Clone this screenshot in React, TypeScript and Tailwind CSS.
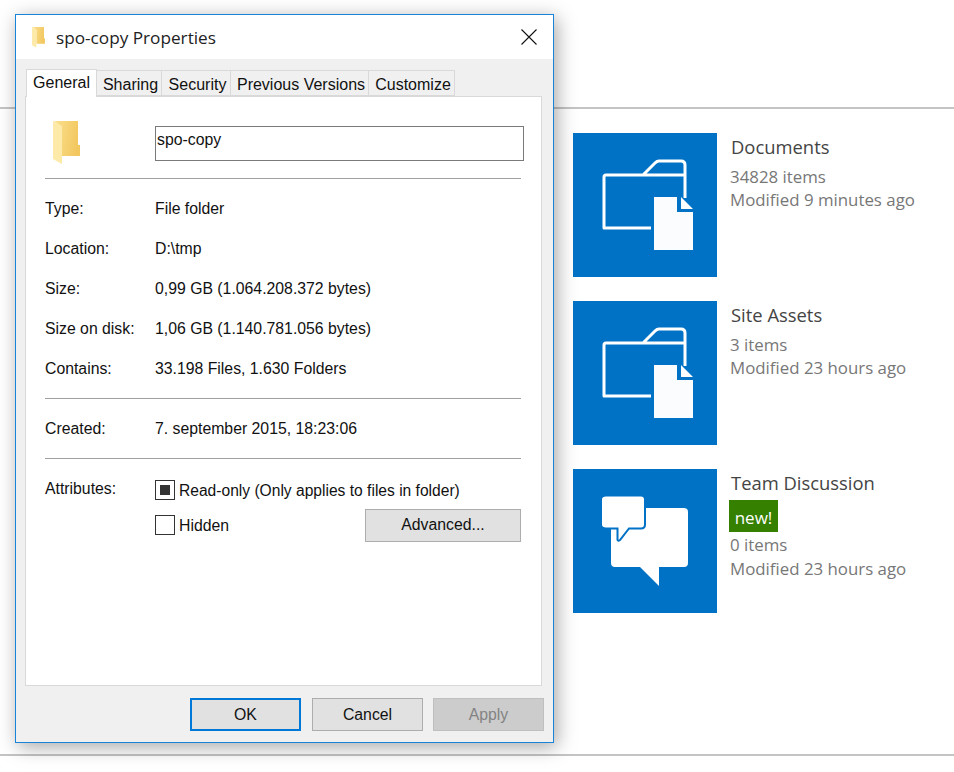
import React from 'react';

const FolderGlyph: React.FC<{ className: string; id: string }> = ({ className, id }) => (
  <svg className={className} viewBox="0 0 27 44">
    <defs>
      <linearGradient id={id} x1="0" y1="0" x2="1" y2="0.2">
        <stop offset="0" stopColor="#fbe08f" />
        <stop offset="1" stopColor="#f2c75f" />
      </linearGradient>
    </defs>
    <path d="M1 0h24v24h2v11H9V6z" fill={`url(#${id})`} />
    <path d="M0 0l9 5v38l-9-5z" fill="#fdeaa8" />
  </svg>
);

const FolderTileIcon = () => (
  <svg className="w-36 h-36" viewBox="0 0 144 144">
    <path d="M78 95H31V44q0-2 2-2H70L82 30q2-2 4-2h22q4 0 4 4v33M70 42h42" fill="none" stroke="#fff" strokeWidth="3" strokeLinejoin="round" />
    <path d="M81 64h23v15h16v38H81z" fill="#fbfcfe" />
    <path d="M108 64l12 12h-12z" fill="#fbfcfe" />
  </svg>
);

const ChatTileIcon = () => (
  <svg className="w-36 h-36" viewBox="0 0 144 144">
    <path d="M43 39h68q4 0 4 4v51q0 4-4 4H86v19L67 98H42q-4 0-4-4V43q0-4 5-4z" fill="#fff" />
    <path d="M33 26.500h35q4 0 4 4v25q0 4-4 4H56L47 71q-2 1.500-2.500 0V59.500H33q-5 0-5-4v-25q0-4 5-4z" fill="#fff" stroke="#0072c6" strokeWidth="2" />
  </svg>
);

const TILES = [
  { title: 'Documents', items: '34828 items', modified: 'Modified 9 minutes ago', icon: <FolderTileIcon /> },
  { title: 'Site Assets', items: '3 items', modified: 'Modified 23 hours ago', icon: <FolderTileIcon /> },
  { title: 'Team Discussion', items: '0 items', modified: 'Modified 23 hours ago', isNew: true, icon: <ChatTileIcon /> },
];

const TABS = [
  { label: 'Sharing', width: 'w-[65px]' },
  { label: 'Security', width: 'w-[69px]' },
  { label: 'Previous Versions', width: 'w-[138px]' },
  { label: 'Customize', width: 'w-[86px]' },
];

const Row: React.FC<{ label: string; value: string }> = ({ label, value }) => (
  <div className="flex h-10 items-center">
    <span className="w-[110px]">{label}</span>
    <span>{value}</span>
  </div>
);

export default function App() {
  return (
    <div className="relative h-[772px] overflow-hidden bg-white font-['Open_Sans',sans-serif]">
      {/* SharePoint page behind the dialog */}
      <div className="h-[109px] border-b-2 border-[#c4c4c4]" />
      <div className="h-[647px] border-b-2 border-[#c4c4c4] pl-[573px] pt-6 flex flex-col gap-6">
        {TILES.map(tile => (
          <div key={tile.title} className="flex">
            <div className="w-36 h-36 bg-[#0072c6] shrink-0">{tile.icon}</div>
            <div className="pl-[13px] pt-[1px]">
              <div className="text-[18.400px] leading-[26px] text-[#444444] pl-[1px]">{tile.title}</div>
              {tile.isNew && (
                <div className="mt-[4px] mb-[1px] -ml-[1px] w-[49px] h-8 bg-[#368000] text-white text-[17px] leading-[35px] text-center">new!</div>
              )}
              <div className={`${tile.isNew ? 'leading-[24px]' : 'mt-[5px] leading-[23px]'} text-[16.850px] text-[#777777]`}>{tile.items}</div>
              <div className="text-[16.850px] leading-[24px] text-[#777777]">{tile.modified}</div>
            </div>
          </div>
        ))}
      </div>

      {/* Properties dialog */}
      <div className="absolute left-[15px] top-[14px] w-[539px] h-[729px] bg-[#f0f0f0] border border-[#1883d7] shadow-[3px_4px_18px_rgba(0,0,0,0.35)] text-[15.800px] text-[#111111] font-['Liberation_Sans',sans-serif] flex flex-col">
        <div className="h-11 bg-white flex items-center shrink-0">
          <FolderGlyph id="small-folder" className="ml-[15px] w-[15px] h-[21px]" />
          <span className="ml-[10px] font-['Open_Sans',sans-serif] text-[17.200px] text-[#222222] pt-[1px]">spo-copy Properties</span>
          <svg className="ml-auto mr-[16px] w-[16px] h-[16px]" viewBox="0 0 16 16">
            <path d="M0.500 0.500l15 15M15.500 0.500l-15 15" stroke="#111" strokeWidth="1.100" fill="none" />
          </svg>
        </div>

        {/* Tabs */}
        <div className="flex items-end ml-[10px] h-[37px] shrink-0 relative z-10 text-[16px]">
          <div className="h-[28px] w-[71px] bg-white border border-b-0 border-[#d9d9d9] flex items-center justify-center -mb-[1px] pb-[1px]">General</div>
          {TABS.map(tab => (
            <div key={tab.label} className={`${tab.width} h-[26px] border border-l-0 border-[#d9d9d9] flex items-center justify-center pt-[3px] pl-[3px]`}>{tab.label}</div>
          ))}
        </div>

        {/* General panel */}
        <div className="mx-[9px] w-[517px] h-[590px] bg-white border border-[#d9d9d9] px-[19px] shrink-0">
          <div className="flex h-[82px] border-b border-[#a0a0a0] w-[476px]">
            <FolderGlyph id="big-folder" className="ml-[8px] mt-[24px] w-[27px] h-[44px]" />
            <div className="ml-[75px] mt-[29px] -mr-[6px] w-[369px] h-[35px] border border-[#7a7a7a] pl-[1px] leading-[25px] shrink-0">spo-copy</div>
          </div>
          <div className="w-[476px] border-b border-[#a0a0a0] h-[220px] pt-[9.500px]">
            <Row label="Type:" value="File folder" />
            <Row label="Location:" value="D:\tmp" />
            <Row label="Size:" value="0,99 GB (1.064.208.372 bytes)" />
            <Row label="Size on disk:" value="1,06 GB (1.140.781.056 bytes)" />
            <Row label="Contains:" value="33.198 Files, 1.630 Folders" />
          </div>
          <div className="w-[476px] border-b border-[#a0a0a0] h-[60px] pt-[9.500px]">
            <Row label="Created:" value="7. september 2015, 18:23:06" />
          </div>
          <div className="w-[476px] flex pt-[9.500px]">
            <span className="w-[110px] leading-[40px] shrink-0">Attributes:</span>
            <div className="flex-1 pt-[11.500px]">
              <div className="flex items-center h-[20px]">
                <span className="w-5 h-5 border border-[#333333] flex items-center justify-center">
                  <span className="w-[10px] h-[10px] bg-[#333333]" />
                </span>
                <span className="ml-[4px] text-[15.600px] pt-[1px]">Read-only (Only applies to files in folder)</span>
              </div>
              <div className="flex items-center mt-[15px] h-[20px]">
                <span className="w-5 h-5 border border-[#333333]" />
                <span className="ml-[4px] pt-[1px]">Hidden</span>
                <div className="ml-auto w-[156px] h-[33px] bg-[#e1e1e1] border border-[#adadad] flex items-center justify-center">Advanced...</div>
              </div>
            </div>
          </div>
        </div>

        {/* Footer buttons */}
        <div className="flex ml-[174px] mt-[12px] gap-[11px]">
          <div className="w-[111px] h-[33px] bg-[#e1e1e1] border-2 border-[#0078d7] flex items-center justify-center">OK</div>
          <div className="w-[111px] h-[33px] bg-[#e1e1e1] border border-[#adadad] flex items-center justify-center">Cancel</div>
          <div className="w-[111px] h-[33px] -ml-[1px] bg-[#cccccc] border border-[#bfbfbf] text-[#838383] flex items-center justify-center">Apply</div>
        </div>
      </div>
    </div>
  );
}
